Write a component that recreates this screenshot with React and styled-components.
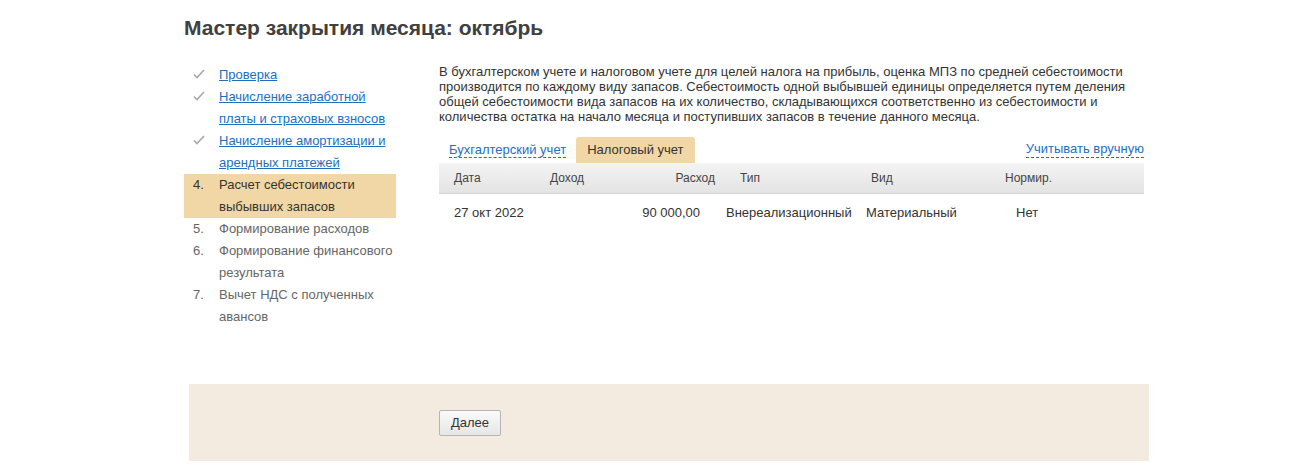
import React from 'react';
import styled, { createGlobalStyle } from 'styled-components';

const GlobalStyle = createGlobalStyle`
  body {
    margin: 0;
    background: #fff;
    font-family: "Liberation Sans", Arial, sans-serif;
    color: #333;
  }
`;

const Page = styled.div`
  width: 960px;
  margin-left: 184px;
  padding-top: 15px;
`;

const Title = styled.h1`
  margin: 0;
  font-size: 21px;
  font-weight: bold;
  color: #404040;
  line-height: 26px;
`;

const Body = styled.div`
  display: flex;
  gap: 43px;
  margin-top: 22px;
  min-height: 300px;
`;

const Steps = styled.ol`
  list-style: none;
  margin: 0;
  padding: 1px 0 0;
  width: 212px;
  flex-shrink: 0;
`;

const Step = styled.li`
  display: flex;
  font-size: 13px;
  line-height: 22px;
  background: ${p => (p.active ? '#f2d7a6' : 'transparent')};
  color: ${p => (p.active ? '#333' : '#666')};
`;

const Marker = styled.span`
  width: 35px;
  flex-shrink: 0;
  padding-left: 9px;
  box-sizing: border-box;
  color: ${p => (p.active ? '#333' : '#666')};
`;

const StepLink = styled.a`
  color: #1d6fbf;
  text-decoration: underline;
  cursor: pointer;
`;

const Main = styled.div`
  flex: 1;
  padding-top: 1px;
`;

const Intro = styled.p`
  margin: 0;
  font-size: 13px;
  line-height: 15px;
  color: #333;
`;

const TabBar = styled.div`
  display: flex;
  align-items: flex-end;
  margin-top: 13px;
  padding-left: 10px;
`;

const Tab = styled.span`
  font-size: 13px;
  line-height: 16px;
  padding: 5px ${p => (p.active ? '11px' : '0')} 5px;
  margin-right: ${p => (p.active ? '0' : '10px')};
  background: ${p => (p.active ? '#f2d7a6' : 'transparent')};
  border-radius: ${p => (p.active ? '3px 3px 0 0' : '0')};
  color: ${p => (p.active ? '#333' : '#1d6fbf')};
`;

const Dashed = styled.span`
  border-bottom: 1px dashed #1d6fbf;
  color: #1d6fbf;
  cursor: pointer;
`;

const ManualLink = styled(Dashed)`
  margin-left: auto;
  font-size: 13px;
  line-height: 16px;
  margin-bottom: 5px;
`;

const Table = styled.div`
  font-size: 13px;
`;

const HeadRow = styled.div`
  display: grid;
  grid-template-columns: 96px 70px 95px 131px 134px 1fr;
  height: 30px;
  align-items: center;
  background: linear-gradient(#f4f4f4, #e3e3e3);
  border-bottom: 1px solid #d6d6d6;
  padding-left: 15px;
  color: #444;
  font-size: 12px;
`;

const HeadCell = styled.span`
  text-align: ${p => (p.right ? 'right' : 'left')};
  padding-left: ${p => (p.pl || 0)}px;
`;

const DataRow = styled.div`
  display: grid;
  grid-template-columns: 96px 70px 80px 140px 140px 1fr;
  height: 36px;
  align-items: center;
  padding-left: 15px;
  color: #333;
`;

const Cell = styled.span`
  text-align: ${p => (p.right ? 'right' : 'left')};
  padding-left: ${p => (p.pl || 0)}px;
`;

const Footer = styled.div`
  margin: 21px 0 0 5px;
  width: 960px;
  height: 77px;
  background: #f3ebdf;
  display: flex;
  align-items: center;
  padding-left: 250px;
  box-sizing: border-box;
`;

const Button = styled.button`
  font-family: "Liberation Sans", Arial, sans-serif;
  font-size: 13px;
  color: #333;
  height: 26px;
  padding: 0 11px;
  border: 1px solid #b5b5b5;
  border-radius: 2px;
  background: linear-gradient(#fafafa, #e6e6e6);
  cursor: pointer;
`;

const Check = () => (
  <svg width="12" height="10" viewBox="0 0 12 10">
    <path d="M1 5.5 L4 8.5 L11 1" fill="none" stroke="#a8a8a8" strokeWidth="1.6" />
  </svg>
);

const steps = [
  { done: true, text: 'Проверка' },
  { done: true, text: 'Начисление заработной платы и страховых взносов' },
  { done: true, text: 'Начисление амортизации и арендных платежей' },
  { n: 4, active: true, text: 'Расчет себестоимости выбывших запасов' },
  { n: 5, text: 'Формирование расходов' },
  { n: 6, text: 'Формирование финансового результата' },
  { n: 7, text: 'Вычет НДС с полученных авансов' },
];

export default function App() {
  return (
    <>
      <GlobalStyle />
      <Page>
        <Title>Мастер закрытия месяца: октябрь</Title>
        <Body>
          <Steps>
            {steps.map((s, i) => (
              <Step key={i} active={s.active}>
                <Marker active={s.active}>{s.done ? <Check /> : `${s.n}.`}</Marker>
                <span>{s.done ? <StepLink>{s.text}</StepLink> : s.text}</span>
              </Step>
            ))}
          </Steps>
          <Main>
            <Intro>
              В бухгалтерском учете и налоговом учете для целей налога на прибыль, оценка МПЗ по средней себестоимости
              производится по каждому виду запасов. Себестоимость одной выбывшей единицы определяется путем деления
              общей себестоимости вида запасов на их количество, складывающихся соответственно из себестоимости и
              количества остатка на начало месяца и поступивших запасов в течение данного месяца.
            </Intro>
            <TabBar>
              <Tab><Dashed>Бухгалтерский учет</Dashed></Tab>
              <Tab active>Налоговый учет</Tab>
              <ManualLink>Учитывать вручную</ManualLink>
            </TabBar>
            <Table>
              <HeadRow>
                <HeadCell>Дата</HeadCell>
                <HeadCell>Доход</HeadCell>
                <HeadCell right>Расход</HeadCell>
                <HeadCell pl={25}>Тип</HeadCell>
                <HeadCell pl={25}>Вид</HeadCell>
                <HeadCell pl={25}>Нормир.</HeadCell>
              </HeadRow>
              <DataRow>
                <Cell>27 окт 2022</Cell>
                <Cell></Cell>
                <Cell right>90 000,00</Cell>
                <Cell pl={26}>Внереализационный</Cell>
                <Cell pl={26}>Материальный</Cell>
                <Cell pl={36}>Нет</Cell>
              </DataRow>
            </Table>
          </Main>
        </Body>
        <Footer>
          <Button>Далее</Button>
        </Footer>
      </Page>
    </>
  );
}
